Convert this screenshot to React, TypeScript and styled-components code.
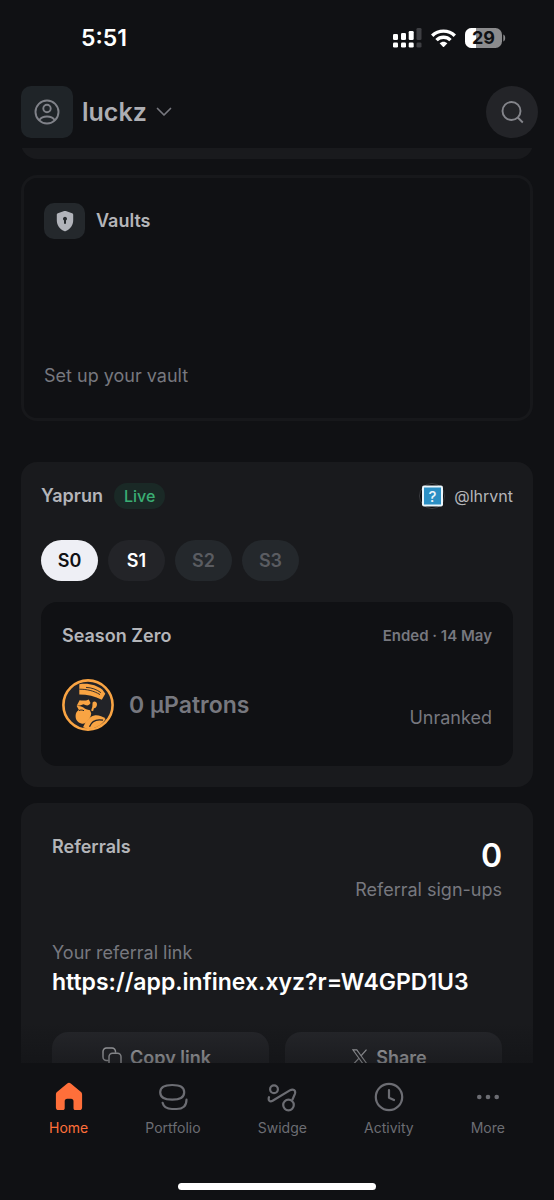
import React, { useState } from "react";
import styled, { createGlobalStyle } from "styled-components";

const color = {
  page: "#101114",
  card: "#191a1d",
  raised: "#232428",
  chip: "#24282c",
  text: "#b4b5b9",
  muted: "#77787f",
  bright: "#ffffff",
  accent: "#ff6f3a",
  gold: "#f9a443",
};

const GlobalStyle = createGlobalStyle`
  *, *::before, *::after { box-sizing: border-box; }
  body {
    margin: 0;
    background: ${color.page};
    color: ${color.text};
    font-family: Inter, "Liberation Sans", sans-serif;
  }
  h1, h2, h3, p { margin: 0; font: inherit; }
  button { font: inherit; color: inherit; border: 0; padding: 0; background: none; cursor: pointer; }
  a { color: inherit; text-decoration: none; }
  svg { display: block; flex: none; }
`;

const Screen = styled.div`
  display: flex;
  flex-direction: column;
  height: 100vh;
  overflow: hidden;
`;

const StatusBar = styled.div`
  display: flex;
  flex: none;
  align-items: center;
  justify-content: space-between;
  height: 76px;
  padding: 0 48px 0 81px;
`;

const Clock = styled.time`
  color: ${color.bright};
  font-size: 23px;
  font-weight: 600;
  line-height: 28px;
`;

const StatusIcons = styled.div`
  display: flex;
  align-items: center;
  gap: 9px;
`;

const TopBar = styled.header`
  display: flex;
  flex: none;
  align-items: center;
  justify-content: space-between;
  padding: 10px 16px 10px 21px;
`;

const Account = styled.button`
  display: flex;
  align-items: center;
  gap: 9px;
  font-size: 25px;
  font-weight: 600;
  line-height: 32px;
  color: #adaeb3;
`;

const Avatar = styled.span`
  display: grid;
  place-items: center;
  width: 52px;
  height: 52px;
  border-radius: 10px;
  background: #1f2428;
  color: #808289;
`;

const SearchButton = styled.button`
  display: grid;
  place-items: center;
  width: 52px;
  height: 52px;
  border-radius: 50%;
  background: ${color.raised};
  color: #84858b;
`;

const Viewport = styled.div`
  position: relative;
  display: flex;
  flex: 1;
  min-height: 0;
`;

const Content = styled.main`
  display: flex;
  flex: 1;
  flex-direction: column;
  gap: 16px;
  padding: 0 21px;
  overflow-y: auto;
  scrollbar-width: none;
`;

const BottomFade = styled.div`
  position: absolute;
  inset: auto 0 0;
  height: 40px;
  background: linear-gradient(rgba(16, 17, 20, 0), rgba(16, 17, 20, 0.5));
  pointer-events: none;
`;

const Card = styled.section<{ $pad: string }>`
  flex: none;
  padding: ${(p) => p.$pad};
  border-radius: 16px;
  background: ${color.card};
`;

const ScrolledCard = styled(Card)`
  height: 40px;
  margin-top: -29px;
`;

const VaultCard = styled.section`
  display: flex;
  flex: none;
  flex-direction: column;
  justify-content: space-between;
  min-height: 246px;
  margin-bottom: 25px;
  padding: 25px 20px 29px;
  border: 3px solid #17181b;
  border-radius: 16px;
`;

const Row = styled.div<{ $gap?: number; $align?: string }>`
  display: flex;
  align-items: ${(p) => p.$align ?? "center"};
  gap: ${(p) => p.$gap ?? 0}px;
`;

const SplitRow = styled(Row)`
  justify-content: space-between;
`;

const VaultBadge = styled.span`
  display: grid;
  place-items: center;
  width: 41px;
  height: 36px;
  border-radius: 10px;
  background: ${color.chip};
`;

const Title = styled.h2`
  font-size: 18px;
  font-weight: 600;
  line-height: 26px;
`;

const Caption = styled.p`
  color: ${color.muted};
  font-size: 18px;
  line-height: 26px;
`;

const LiveTag = styled.span`
  padding: 0 10px;
  border-radius: 13px;
  background: #1a2926;
  color: #3aae74;
  font-size: 16px;
  font-weight: 500;
  line-height: 26px;
`;

const Handle = styled.a`
  display: flex;
  align-items: center;
  gap: 9px;
  font-size: 16px;
  line-height: 26px;
`;

const Seasons = styled.div`
  display: flex;
  gap: 10px;
  margin: 31px 0 21px;
`;

const SeasonButton = styled.button<{ $active: boolean }>`
  width: 57px;
  height: 41px;
  border-radius: 21px;
  background: ${(p) => (p.$active ? "#eeeff5" : color.raised)};
  color: ${(p) => (p.$active ? color.page : color.bright)};
  font-size: 18px;
  font-weight: 600;

  &:disabled {
    background: ${color.chip};
    color: #5a5c61;
    cursor: default;
  }
`;

const SeasonPanel = styled.article`
  padding: 21px 21px 35px;
  border-radius: 16px;
  background: ${color.page};
`;

const SeasonStatus = styled.span`
  color: ${color.muted};
  font-size: 15px;
  font-weight: 600;
  line-height: 26px;
`;

const Score = styled(SplitRow)`
  margin-top: 30px;
`;

const Points = styled.span`
  color: ${color.muted};
  font-size: 23px;
  font-weight: 600;
  line-height: 32px;
`;

const Rank = styled(Caption)`
  align-self: flex-end;
`;

const ReferralCount = styled.div`
  text-align: right;
`;

const Count = styled.p`
  color: ${color.bright};
  font-size: 32px;
  font-weight: 600;
  line-height: 43px;
`;

const ReferralLink = styled.a`
  display: block;
  margin-bottom: 34px;
  color: ${color.bright};
  font-size: 23px;
  font-weight: 600;
  line-height: 32px;
`;

const LinkCaption = styled(Caption)`
  margin-top: 37px;
`;

const ActionButton = styled.button`
  display: flex;
  flex: 1;
  align-items: center;
  justify-content: center;
  gap: 8px;
  height: 50px;
  padding-right: 8px;
  border-radius: 16px;
  background: #26272b;
  color: #c8c9cd;
  font-size: 18px;
  font-weight: 600;
`;

const TabBar = styled.footer`
  flex: none;
  padding: 19px 49px 10px;
`;

const TabList = styled.nav`
  display: flex;
  justify-content: space-between;
`;

const TabLink = styled.a<{ $active: boolean }>`
  display: flex;
  flex-direction: column;
  align-items: center;
  gap: 6px;
  color: ${(p) => (p.$active ? color.accent : "#6c6d73")};
  font-size: 14px;
  line-height: 20px;
`;

const HomeIndicator = styled.div`
  width: 198px;
  height: 7px;
  margin: 45px auto 0;
  border-radius: 4px;
  background: ${color.bright};
`;

const SignalIcon = () => (
  <svg width="29" height="20" viewBox="0 0 29 20" fill="#fff">
    <rect x="0" y="6" width="5" height="6" rx="1.3" />
    <rect x="8" y="5" width="5" height="7" rx="1.3" />
    <rect x="15.700" y="3" width="5" height="9" rx="1.3" />
    <rect x="0" y="14.500" width="5" height="5" rx="1.3" />
    <rect x="8" y="14.500" width="5" height="5" rx="1.3" />
    <rect x="15.700" y="14.500" width="5" height="5" rx="1.3" />
    <g fill="#3e3f43">
      <rect x="23.500" y="0" width="5" height="12" rx="1.3" />
      <rect x="23.500" y="14.500" width="5" height="5" rx="1.3" />
    </g>
  </svg>
);

const WifiIcon = () => (
  <svg width="25" height="19" viewBox="0 0 25 19">
    <g fill="none" stroke="#fff" strokeWidth="3.400">
      <path d="M1.200 6.700C7.500.6 17.500.6 23.800 6.700" />
      <path d="M5.500 11.100c3.900-3.900 10.100-3.900 14 0" />
    </g>
    <path d="M8.600 14.200c2.200-2.100 5.600-2.100 7.800 0l-3.300 3.500a.9.9 0 0 1-1.200 0z" fill="#fff" />
  </svg>
);

const BatteryIcon = () => (
  <svg width="41" height="20" viewBox="0 0 41 20">
    <defs>
      <clipPath id="cell">
        <rect width="37" height="20" rx="6.500" />
      </clipPath>
    </defs>
    <g clipPath="url(#cell)">
      <rect width="37" height="20" fill="#8b8b8d" />
      <rect width="11" height="20" fill="#fff" />
    </g>
    <path d="M38.300 6.500c2.500.8 2.500 6.200 0 7z" fill="#8b8b8d" />
    <text x="18.500" y="16.300" textAnchor="middle" fontSize="18" fontWeight="700" fill="#101114">
      29
    </text>
  </svg>
);

const UserIcon = () => (
  <svg width="26" height="26" viewBox="0 0 26 26" fill="none" stroke="currentColor" strokeWidth="1.900">
    <circle cx="13" cy="13" r="11.500" />
    <circle cx="13" cy="9.500" r="3.700" />
    <path d="M5.200 21.200c1.800-2.600 4.600-3.700 7.800-3.700s6 1.100 7.800 3.700" />
  </svg>
);

const ChevronIcon = () => (
  <svg width="16" height="10" viewBox="0 0 16 10" fill="none" stroke="#77787f" strokeWidth="1.700" strokeLinecap="round" strokeLinejoin="round">
    <path d="M1.500 1.500 8 8l6.500-6.500" />
  </svg>
);

const SearchIcon = () => (
  <svg width="24" height="24" viewBox="0 0 24 24" fill="none" stroke="currentColor" strokeWidth="1.900">
    <circle cx="11.500" cy="11" r="9" />
    <path d="m17.500 17.300 5.300 5.200" />
  </svg>
);

const ShieldIcon = () => (
  <svg width="18" height="22" viewBox="0 0 18 22">
    <path d="M8.200 1.100a2.500 2.500 0 0 1 1.600 0l6.300 2.200c.7.200 1.100.8 1.100 1.500v5.500c0 5-2.800 8.700-7.300 10.800a2.200 2.200 0 0 1-1.800 0C3.600 19 .8 15.300.8 10.300V4.800c0-.7.400-1.300 1.100-1.500z" fill="#b1b3ba" />
    <path d="M9 6.700a2.100 2.100 0 0 0-1 3.900v3.200h2v-3.200a2.100 2.100 0 0 0-1-3.900z" fill="#24282c" />
  </svg>
);

const PlaceholderAvatar = () => (
  <svg width="26" height="26" viewBox="0 0 26 26">
    <circle cx="13" cy="13" r="12.500" fill="#0b0b0d" stroke="#3c3d40" />
    <rect x="3" y="2.500" width="21" height="21" rx="2" fill="#e9f5fb" />
    <rect x="5" y="4.500" width="17" height="17" fill="#2b8fc4" />
    <text x="13.500" y="18.500" textAnchor="middle" fontSize="15" fontWeight="500" fill="#e9f5fb">
      ?
    </text>
  </svg>
);

const PatronCoin = () => (
  <svg width="52" height="52" viewBox="0 0 52 52">
    <circle cx="26" cy="26" r="24.600" fill="#222328" stroke={color.gold} strokeWidth="2.600" />
    <g fill={color.gold}>
      <path d="M17.300 5.300C26 3.800 34.500 6 40.500 10.800L43.300 14.800 39.800 20.800C33 17 25.500 15.400 17.300 15.400z" />
      <path d="M17.600 21.200c3.300.8 6.500.4 9.200-.8l1.700 3.600c-.9 2-2.600 2.700-4.500 2.300l-2.600-1-3.400 1.300-3.300.2z" />
      <path d="M14.700 26.900c2.500 0 4.800.3 6.700 1.700 1.600 1.500 3.800 2.400 6.600 2.600l1.200 3c0 3.500-2 5.500-3.800 7.800-1.500 1.900-3 2.900-5.300 2.700-4-.7-6.700-3.900-6.500-8 .1-2.600 1.200-4.400 3.300-5.600z" />
      <path d="M30.600 23.500c1.500-1.800 4.300-1 4.400 1.800 0 2.300-1.200 3.900-3.100 4l-.8 3-2-.8 1.200-3.600z" />
      <path d="M21 48.300C23.500 42.600 27.300 37.600 32.300 36.500c3.900-.6 8 .8 11.300 3.400C40.300 45.200 34.500 49.500 26 49.900z" />
    </g>
    <g fill="none" stroke="#222328">
      <path d="M24 8.400c5.600.2 10.600 2 14.800 5.200" strokeWidth=".9" />
      <path d="M17.300 10.200c7.500 0 14.500 1.500 20.700 5.400" strokeWidth=".9" />
      <path d="M17 31.500c1.700-.7 3.300-.6 5 .2" strokeWidth="1" />
      <path d="M27.500 47.800c2-5.300 6.500-8 13.500-6.600" strokeWidth="1.300" />
    </g>
  </svg>
);

const CopyIcon = () => (
  <svg width="20" height="20" viewBox="0 0 20 20" fill="none" stroke="currentColor" strokeWidth="1.500">
    <path d="M6.700 13.500H4.500A3.500 3.500 0 0 1 1 10V4.500A3.500 3.500 0 0 1 4.500 1H10a3.500 3.500 0 0 1 3.500 3.500v1.300" />
    <rect x="7" y="6.200" width="12" height="12.800" rx="3.500" />
  </svg>
);

const XIcon = () => (
  <svg width="16" height="16" viewBox="0 0 16 16" fill="none" stroke="currentColor">
    <path d="M.9.9h3.900l10.300 14.200h-3.900z" strokeWidth="1.100" />
    <path d="M14.500.7 8.900 7M6.800 9.300 1.300 15.300" strokeWidth="1.200" />
  </svg>
);

const HomeIcon = () => (
  <svg width="30" height="30" viewBox="0 0 30 30">
    <path d="M13.200 1.600a2.800 2.800 0 0 1 3.600 0l9.900 8.200c1 .8 1.400 1.600 1.400 2.900v12.800c0 1.600-1 2.600-2.600 2.600h-4.200c-1 0-1.800-.8-1.800-1.800v-7c0-1.600-.9-2.500-2.500-2.500h-3.800c-1.600 0-2.500.9-2.500 2.500v7c0 1-.8 1.800-1.800 1.800H4.500c-1.600 0-2.600-1-2.600-2.600V12.700c0-1.300.4-2.100 1.400-2.900z" fill="currentColor" />
  </svg>
);

const PortfolioIcon = () => (
  <svg width="30" height="30" viewBox="0 0 30 30" fill="none" stroke="currentColor" strokeWidth="2.200" strokeLinecap="round">
    <path d="M14.200 3C6 3 2.200 5.200 2.200 10.300s3.800 7.400 12 7.400 12-2.300 12-7.400S22.400 3 14.200 3z" />
    <path d="M4.600 20.800C5.600 25 9 27 14 27h4.500c6.300 0 10-2.900 10-9.300" />
  </svg>
);

const SwidgeIcon = () => (
  <svg width="30" height="30" viewBox="0 0 30 30" fill="none" stroke="currentColor" strokeWidth="2.200" strokeLinecap="round">
    <circle cx="7" cy="7.200" r="3.900" />
    <circle cx="21.500" cy="23" r="5.300" />
    <path d="M2 15.200c-1.100 3.100.9 5 3.600 3.500L22.800 8.400c3.700-2.200 6.300.4 5 3.700L25.500 17.500" />
  </svg>
);

const ActivityIcon = () => (
  <svg width="30" height="30" viewBox="0 0 30 30" fill="none" stroke="currentColor" strokeWidth="2.200" strokeLinecap="round" strokeLinejoin="round">
    <circle cx="15" cy="15" r="13.200" />
    <path d="M15 8v7.700l5 2.400" />
  </svg>
);

const MoreIcon = () => (
  <svg width="30" height="30" viewBox="0 0 30 30" fill="currentColor">
    <circle cx="6.300" cy="15" r="2.300" />
    <circle cx="15" cy="15" r="2.300" />
    <circle cx="23.700" cy="15" r="2.300" />
  </svg>
);

const seasons = [
  { id: "S0", open: true },
  { id: "S1", open: true },
  { id: "S2", open: false },
  { id: "S3", open: false },
];

const tabs = [
  { label: "Home", Icon: HomeIcon },
  { label: "Portfolio", Icon: PortfolioIcon },
  { label: "Swidge", Icon: SwidgeIcon },
  { label: "Activity", Icon: ActivityIcon },
  { label: "More", Icon: MoreIcon },
];

export default function App() {
  const [season, setSeason] = useState("S0");
  const [tab, setTab] = useState("Home");

  return (
    <Screen>
      <GlobalStyle />
      <StatusBar>
        <Clock>5:51</Clock>
        <StatusIcons>
          <SignalIcon />
          <WifiIcon />
          <BatteryIcon />
        </StatusIcons>
      </StatusBar>

      <TopBar>
        <Account>
          <Avatar>
            <UserIcon />
          </Avatar>
          luckz
          <ChevronIcon />
        </Account>
        <SearchButton aria-label="Search">
          <SearchIcon />
        </SearchButton>
      </TopBar>

      <Viewport>
        <Content>
          <ScrolledCard $pad="0" />

          <VaultCard>
            <Row $gap={11}>
              <VaultBadge>
                <ShieldIcon />
              </VaultBadge>
              <Title>Vaults</Title>
            </Row>
            <Caption>Set up your vault</Caption>
          </VaultCard>

          <Card $pad="21px 20px">
            <SplitRow>
              <Row $gap={11}>
                <Title>Yaprun</Title>
                <LiveTag>Live</LiveTag>
              </Row>
              <Handle href="#profile">
                <PlaceholderAvatar />
                @lhrvnt
              </Handle>
            </SplitRow>
            <Seasons>
              {seasons.map(({ id, open }) => (
                <SeasonButton key={id} $active={id === season} disabled={!open} onClick={() => setSeason(id)}>
                  {id}
                </SeasonButton>
              ))}
            </Seasons>
            <SeasonPanel>
              <SplitRow>
                <Title as="h3">Season Zero</Title>
                <SeasonStatus>Ended · 14 May</SeasonStatus>
              </SplitRow>
              <Score>
                <Row $gap={15}>
                  <PatronCoin />
                  <Points>0 µPatrons</Points>
                </Row>
                <Rank>Unranked</Rank>
              </Score>
            </SeasonPanel>
          </Card>

          <Card $pad="31px">
            <SplitRow $align="flex-start">
              <Title>Referrals</Title>
              <ReferralCount>
                <Count>0</Count>
                <Caption>Referral sign-ups</Caption>
              </ReferralCount>
            </SplitRow>
            <LinkCaption>Your referral link</LinkCaption>
            <ReferralLink href="#referral">https://app.infinex.xyz?r=W4GPD1U3</ReferralLink>
            <Row $gap={16}>
              <ActionButton>
                <CopyIcon />
                Copy link
              </ActionButton>
              <ActionButton>
                <XIcon />
                Share
              </ActionButton>
            </Row>
          </Card>
        </Content>
        <BottomFade />
      </Viewport>

      <TabBar>
        <TabList>
          {tabs.map(({ label, Icon }) => (
            <TabLink key={label} href={`#${label.toLowerCase()}`} $active={label === tab} onClick={() => setTab(label)}>
              <Icon />
              {label}
            </TabLink>
          ))}
        </TabList>
        <HomeIndicator />
      </TabBar>
    </Screen>
  );
}
